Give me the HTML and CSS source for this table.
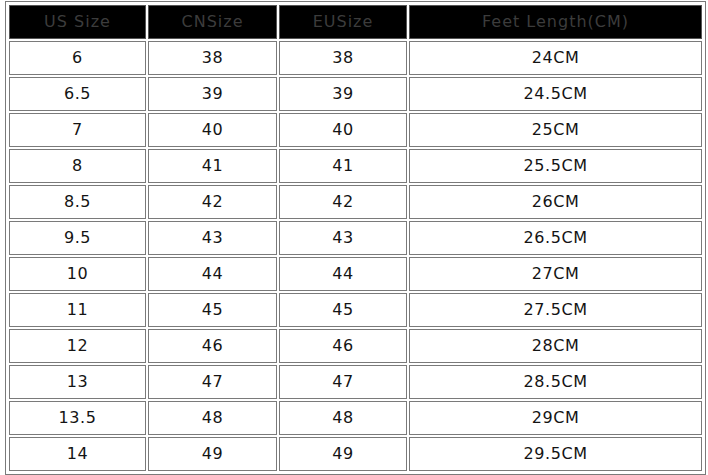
FILE: index.html
```html
<!DOCTYPE html>
<html>
<head>
<meta charset="utf-8">
<link rel="stylesheet" href="styles.css">
</head>
<body>
<table class="size-table">
  <thead>
    <tr><th class="c1">US Size</th><th class="c2">CNSize</th><th class="c3">EUSize</th><th class="c4">Feet Length(CM)</th></tr>
  </thead>
  <tbody>
    <tr><td>6</td><td>38</td><td>38</td><td>24CM</td></tr>
    <tr><td>6.5</td><td>39</td><td>39</td><td>24.5CM</td></tr>
    <tr><td>7</td><td>40</td><td>40</td><td>25CM</td></tr>
    <tr><td>8</td><td>41</td><td>41</td><td>25.5CM</td></tr>
    <tr><td>8.5</td><td>42</td><td>42</td><td>26CM</td></tr>
    <tr><td>9.5</td><td>43</td><td>43</td><td>26.5CM</td></tr>
    <tr><td>10</td><td>44</td><td>44</td><td>27CM</td></tr>
    <tr><td>11</td><td>45</td><td>45</td><td>27.5CM</td></tr>
    <tr><td>12</td><td>46</td><td>46</td><td>28CM</td></tr>
    <tr><td>13</td><td>47</td><td>47</td><td>28.5CM</td></tr>
    <tr><td>13.5</td><td>48</td><td>48</td><td>29CM</td></tr>
    <tr><td>14</td><td>49</td><td>49</td><td>29.5CM</td></tr>
  </tbody>
</table>
</body>
</html>
```

FILE: styles.css
```css
html, body {
  margin: 0;
  padding: 0;
  background: #ffffff;
}
body {
  padding: 1px 0 0 5px;
  font-family: "DejaVu Sans", Verdana, sans-serif;
}
.size-table {
  border-collapse: separate;
  border-spacing: 2px;
  border: 1px solid #7a7a7a;
  padding: 1px;
  width: 701px;
  table-layout: fixed;
}
.size-table th,
.size-table td {
  border: 1px solid #7a7a7a;
  height: 31px;
  padding: 0 0 1px 0;
  text-align: center;
  vertical-align: middle;
  font-size: 16px;
  letter-spacing: 0.6px;
  font-weight: normal;
  color: #141414;
}
.size-table th {
  background: #000000;
  color: #3c3c3c;
  border-color: #555555;
  letter-spacing: 1px;
}
.c1 { width: 135px; }
.c2 { width: 127px; }
.c3 { width: 126px; }
.c4 { width: auto; }
```
